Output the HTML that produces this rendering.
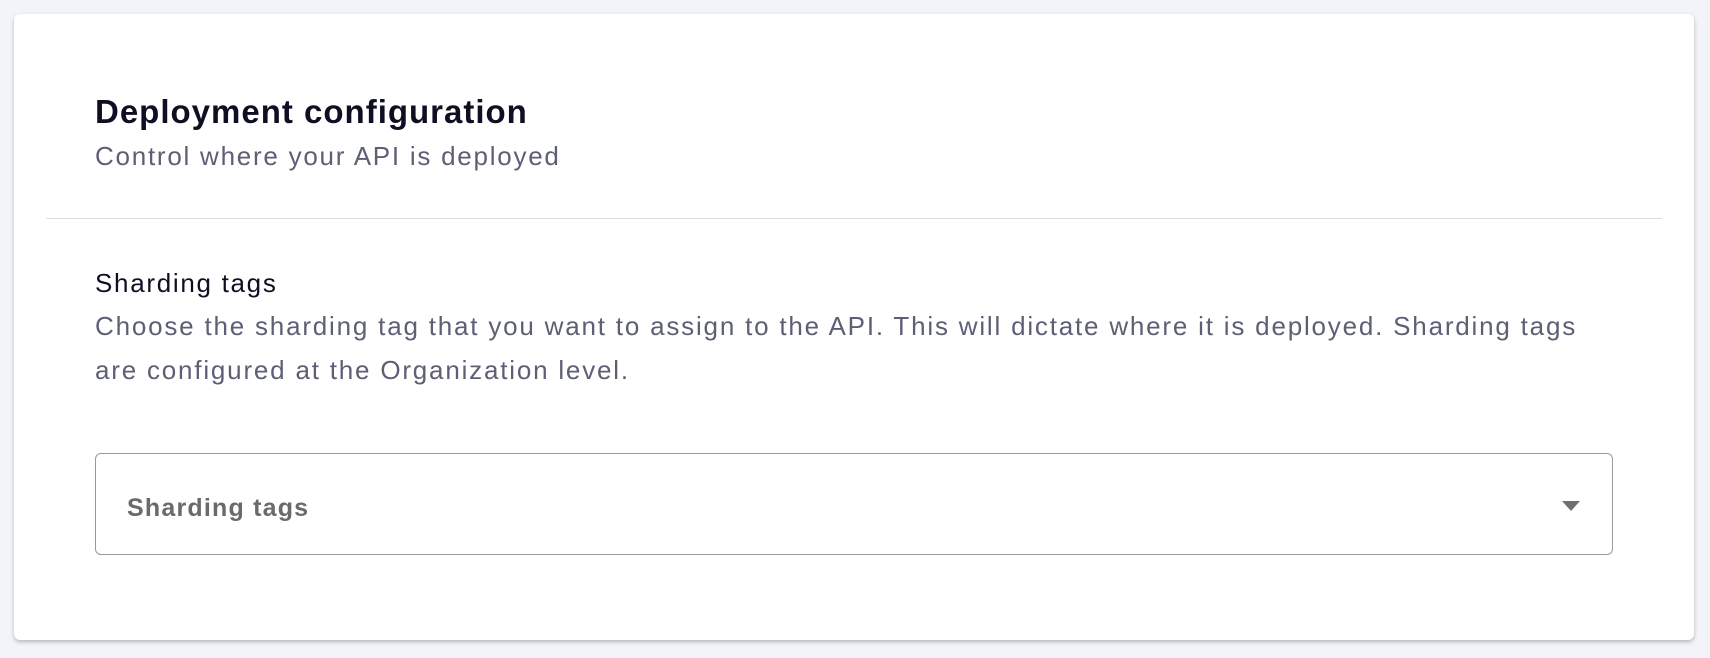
<!DOCTYPE html>
<html><head><meta charset="utf-8"><style>
html,body{margin:0;padding:0;width:1710px;height:658px;background:#f3f4f9;overflow:hidden;font-family:"Liberation Sans",sans-serif;}
.card{position:absolute;left:14px;top:14px;width:1680px;height:626px;background:#fff;border-radius:6px;box-shadow:0 2px 4px rgba(0,0,0,0.25);}
.t{position:absolute;white-space:nowrap;}
h1{position:absolute;margin:0;left:95px;top:93px;font-size:33px;font-weight:bold;color:#0f0f24;letter-spacing:1px;white-space:nowrap;}
.sub{left:95px;top:141px;font-size:26px;color:#5d5f75;letter-spacing:1.75px;}
.hr{position:absolute;left:46px;top:218px;width:1616px;height:1px;background:#dcdde3;}
.lab{left:95px;top:268px;font-size:26px;color:#0f0f24;letter-spacing:1.7px;}
.desc{left:95px;top:304px;font-size:26px;color:#5d5f75;letter-spacing:1.8px;line-height:44px;}
.sel{position:absolute;left:95px;top:453px;width:1518px;height:102px;border:1.5px solid #9a9a9a;border-radius:6px;box-sizing:border-box;}
.ph{left:127px;top:494px;font-size:25px;font-weight:bold;color:#6a6a6a;letter-spacing:1.2px;}
.arr{position:absolute;left:1562px;top:501px;width:0;height:0;border-left:9px solid transparent;border-right:9px solid transparent;border-top:10px solid #707070;}
</style></head><body>
<div class="card"></div>
<h1>Deployment configuration</h1>
<div class="t sub">Control where your API is deployed</div>
<div class="hr"></div>
<div class="t lab">Sharding tags</div>
<div class="t desc">Choose the sharding tag that you want to assign to the API. This will dictate where it is deployed. Sharding tags<br>are configured at the Organization level.</div>
<div class="sel"></div>
<div class="t ph">Sharding tags</div>
<div class="arr"></div>
</body></html>
